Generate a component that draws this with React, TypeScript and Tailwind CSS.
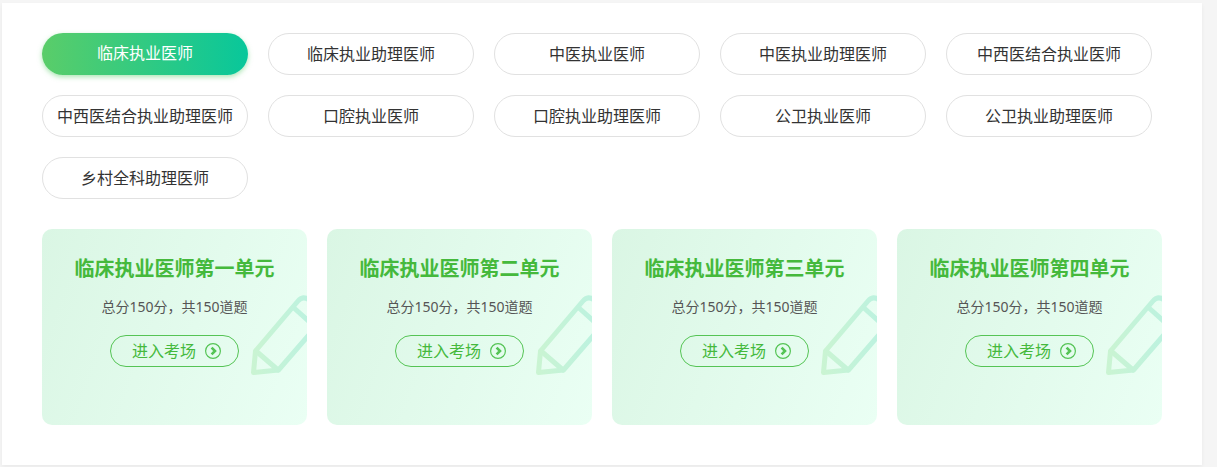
import { useState } from "react";

type Unit = {
  name: string;
  score: number;
  count: number;
};

const categories: string[] = [
  "临床执业医师",
  "临床执业助理医师",
  "中医执业医师",
  "中医执业助理医师",
  "中西医结合执业医师",
  "中西医结合执业助理医师",
  "口腔执业医师",
  "口腔执业助理医师",
  "公卫执业医师",
  "公卫执业助理医师",
  "乡村全科助理医师",
];

const units: Unit[] = [
  { name: "第一单元", score: 150, count: 150 },
  { name: "第二单元", score: 150, count: 150 },
  { name: "第三单元", score: 150, count: 150 },
  { name: "第四单元", score: 150, count: 150 },
];

function classNames(...classes: string[]) {
  return classes.filter(Boolean).join(" ");
}

function Pencil({ id }: { id: string }) {
  return (
    <svg
      aria-hidden="true"
      viewBox="0 0 60 92"
      className="absolute right-0 top-[60px] h-[92px] w-[60px]"
      fill="none"
      stroke={`url(#${id})`}
      strokeWidth="5"
      strokeLinejoin="round"
      strokeLinecap="round"
    >
      <defs>
        <linearGradient
          id={id}
          gradientUnits="userSpaceOnUse"
          x1="5"
          y1="50"
          x2="60"
          y2="50"
        >
          <stop offset="0" stopColor="#caf4d2" />
          <stop offset="1" stopColor="#bdf2df" />
        </linearGradient>
      </defs>
      <path d="M6.5 83.5 8.5 62 51 12Q56 6 62 11L74 21Q79 26 74 32L31.5 81Z" />
      <path d="M9 62 31 81M47 19 66 36" />
    </svg>
  );
}

function EnterIcon() {
  return (
    <svg
      aria-hidden="true"
      viewBox="0 0 16 16"
      className="h-4 w-4"
      fill="none"
      stroke="#55c455"
    >
      <circle cx="8" cy="8" r="7.4" strokeWidth="1.2" />
      <path d="M6.6 4.6 10 8 6.6 11.4" strokeWidth="2.6" />
    </svg>
  );
}

export default function App() {
  const [current, setCurrent] = useState(categories[0]);

  return (
    <div className="bg-[#f5f5f5] pt-[3px] pr-[15px] pb-0.5 pl-0.5 font-['Noto_Sans','Noto_Sans_CJK_SC',sans-serif]">
      <main className="bg-white px-10 pt-[30px] pb-10 shadow-[0_2px_4px_rgba(0,0,0,0.05)]">
        <nav className="flex flex-wrap gap-5">
          {categories.map((item) => (
            <button
              key={item}
              type="button"
              onClick={() => setCurrent(item)}
              className={classNames(
                item === current
                  ? "bg-[linear-gradient(90deg,#5acd69,#08c79b)] pb-0.5 text-white shadow-[0_2px_5px_rgba(90,205,105,0.5)]"
                  : "border border-[#e1e1e1] bg-white text-[#333]",
                "h-[42px] w-[206px] cursor-pointer rounded-full text-base whitespace-nowrap"
              )}
            >
              {item}
            </button>
          ))}
        </nav>
        <ul className="mt-[30px] grid grid-cols-4 gap-5">
          {units.map((unit, index) => (
            <li
              key={unit.name}
              className="relative flex h-[196px] flex-col items-center overflow-hidden rounded-[10px] bg-[linear-gradient(110deg,#daf6e4,#eafff4)] pt-6"
            >
              <Pencil id={`pencil-${index}`} />
              <h2 className="relative text-xl leading-8 font-bold text-[#45b93c]">
                {current}
                {unit.name}
              </h2>
              <p className="relative mt-3 text-sm leading-5 text-[#555]">
                总分{unit.score}分，共{unit.count}道题
              </p>
              <a
                href="#"
                className="relative mt-[18px] flex h-8 items-center gap-[9px] rounded-full border border-[#55c455] pr-[17px] pl-[21px] text-base text-[#45b93c]"
              >
                进入考场
                <EnterIcon />
              </a>
            </li>
          ))}
        </ul>
      </main>
    </div>
  );
}
